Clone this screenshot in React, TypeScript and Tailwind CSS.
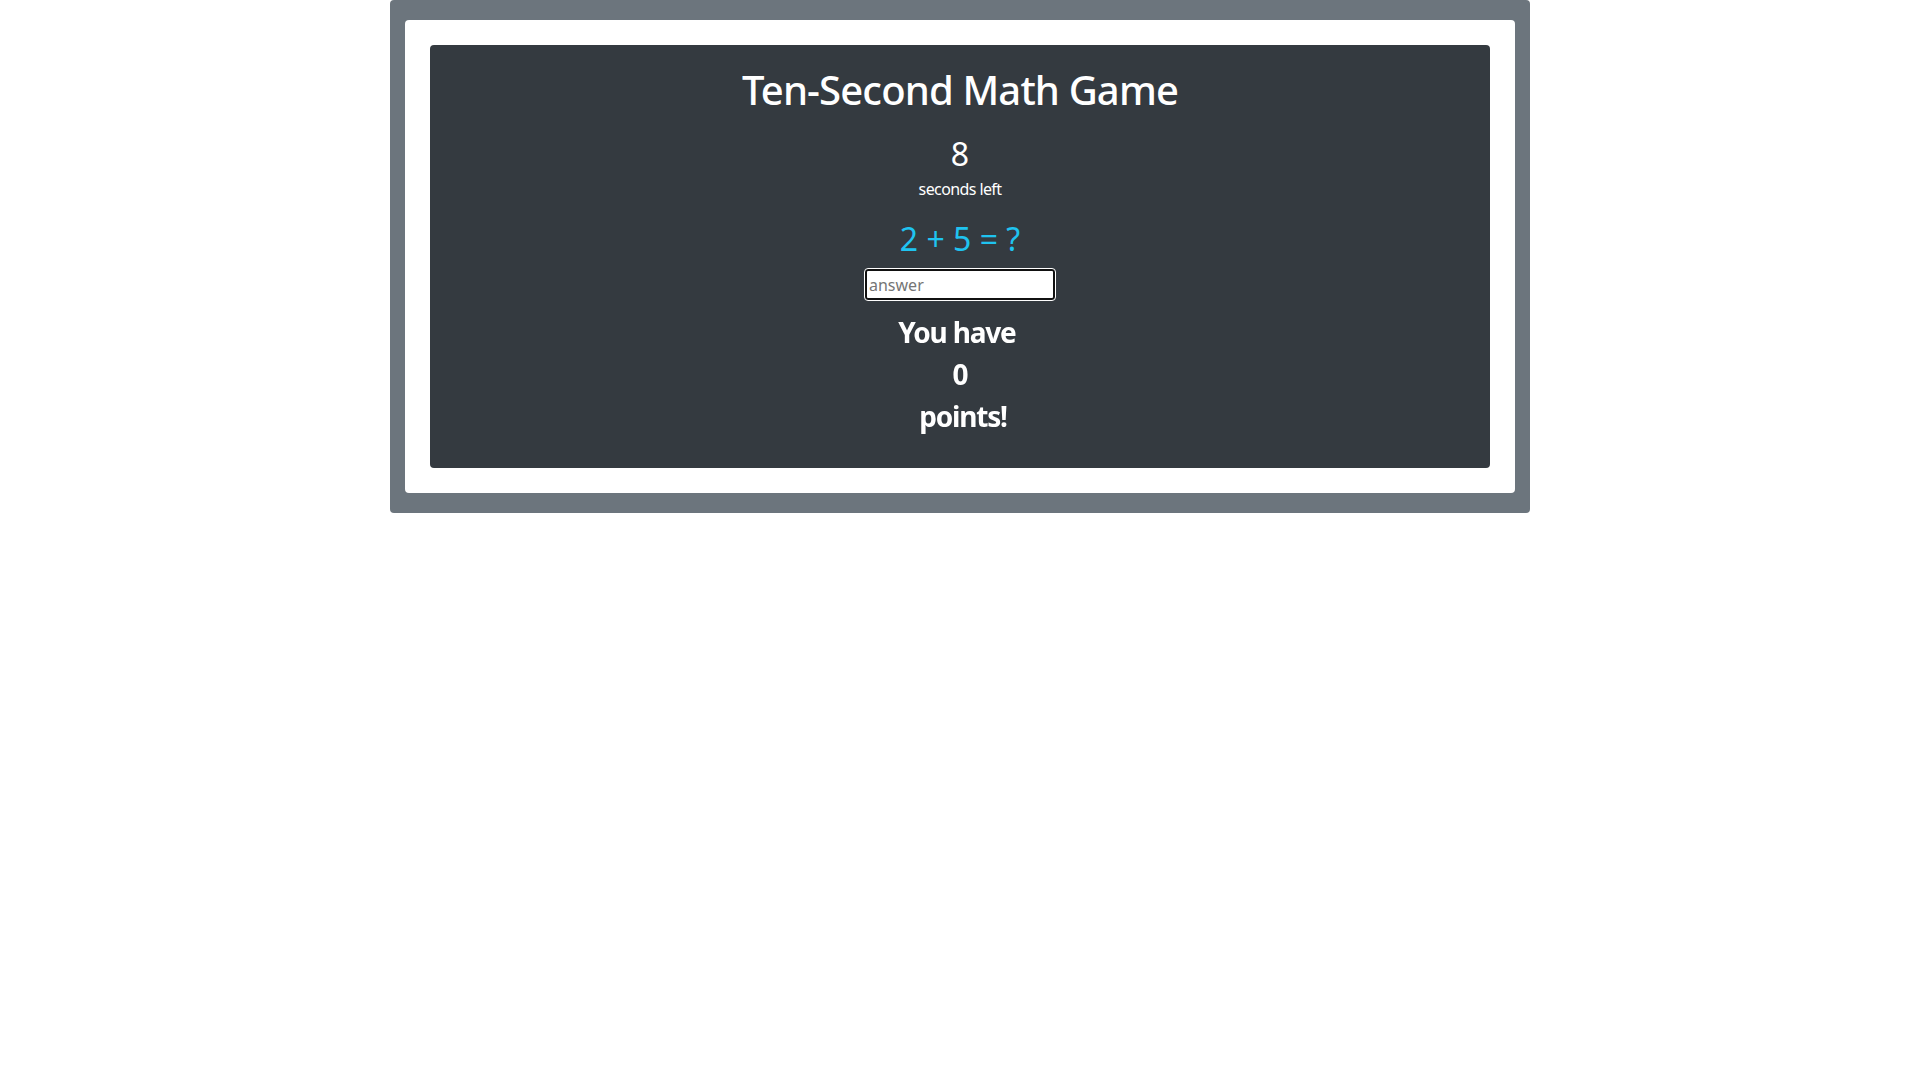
import { useState } from "react";

export default function App() {
  const [answer, setAnswer] = useState("");

  return (
    <div
      className="min-h-screen bg-white"
      style={{ fontFamily: '"Noto Sans", "Open Sans", sans-serif' }}
    >
      <div className="mx-auto w-[1140px] rounded bg-[#6c757d] px-[15px] py-5">
        <div className="rounded bg-white p-[25px]">
          <div className="flex flex-col items-center rounded bg-[#343a40] pt-[21px] pb-[31px] text-center text-white">
            <h1 className="text-[40px] leading-[48px] font-medium tracking-[-0.85px]">
              Ten-Second Math Game
            </h1>

            {/* TIMER */}
            <div className="mt-4 text-[32px] leading-[48px]">8</div>
            <div className="-mt-px text-base leading-6 tracking-[-0.6px]">
              seconds left
            </div>

            {/* QUESTION */}
            <div className="mt-[14px] text-[32px] leading-[48px] text-[#1fc3f0]">
              2 + 5 = ?
            </div>

            <input
              autoFocus
              placeholder="answer"
              value={answer}
              onChange={(e) => setAnswer(e.target.value)}
              className="mt-[6px] h-[31px] w-[190px] rounded-[3px] border-2 border-[#111] bg-white px-0.5 text-base text-black outline outline-1 outline-white placeholder:text-[#757575]"
            />

            {/* SCORE */}
            <h3 className="mt-[11px] text-[28px] leading-[42px] font-bold tracking-[-1.2px]">
              <div>You have&nbsp;</div>
              <div>0</div>
              <div>&nbsp;points!</div>
            </h3>
          </div>
        </div>
      </div>
    </div>
  );
}
